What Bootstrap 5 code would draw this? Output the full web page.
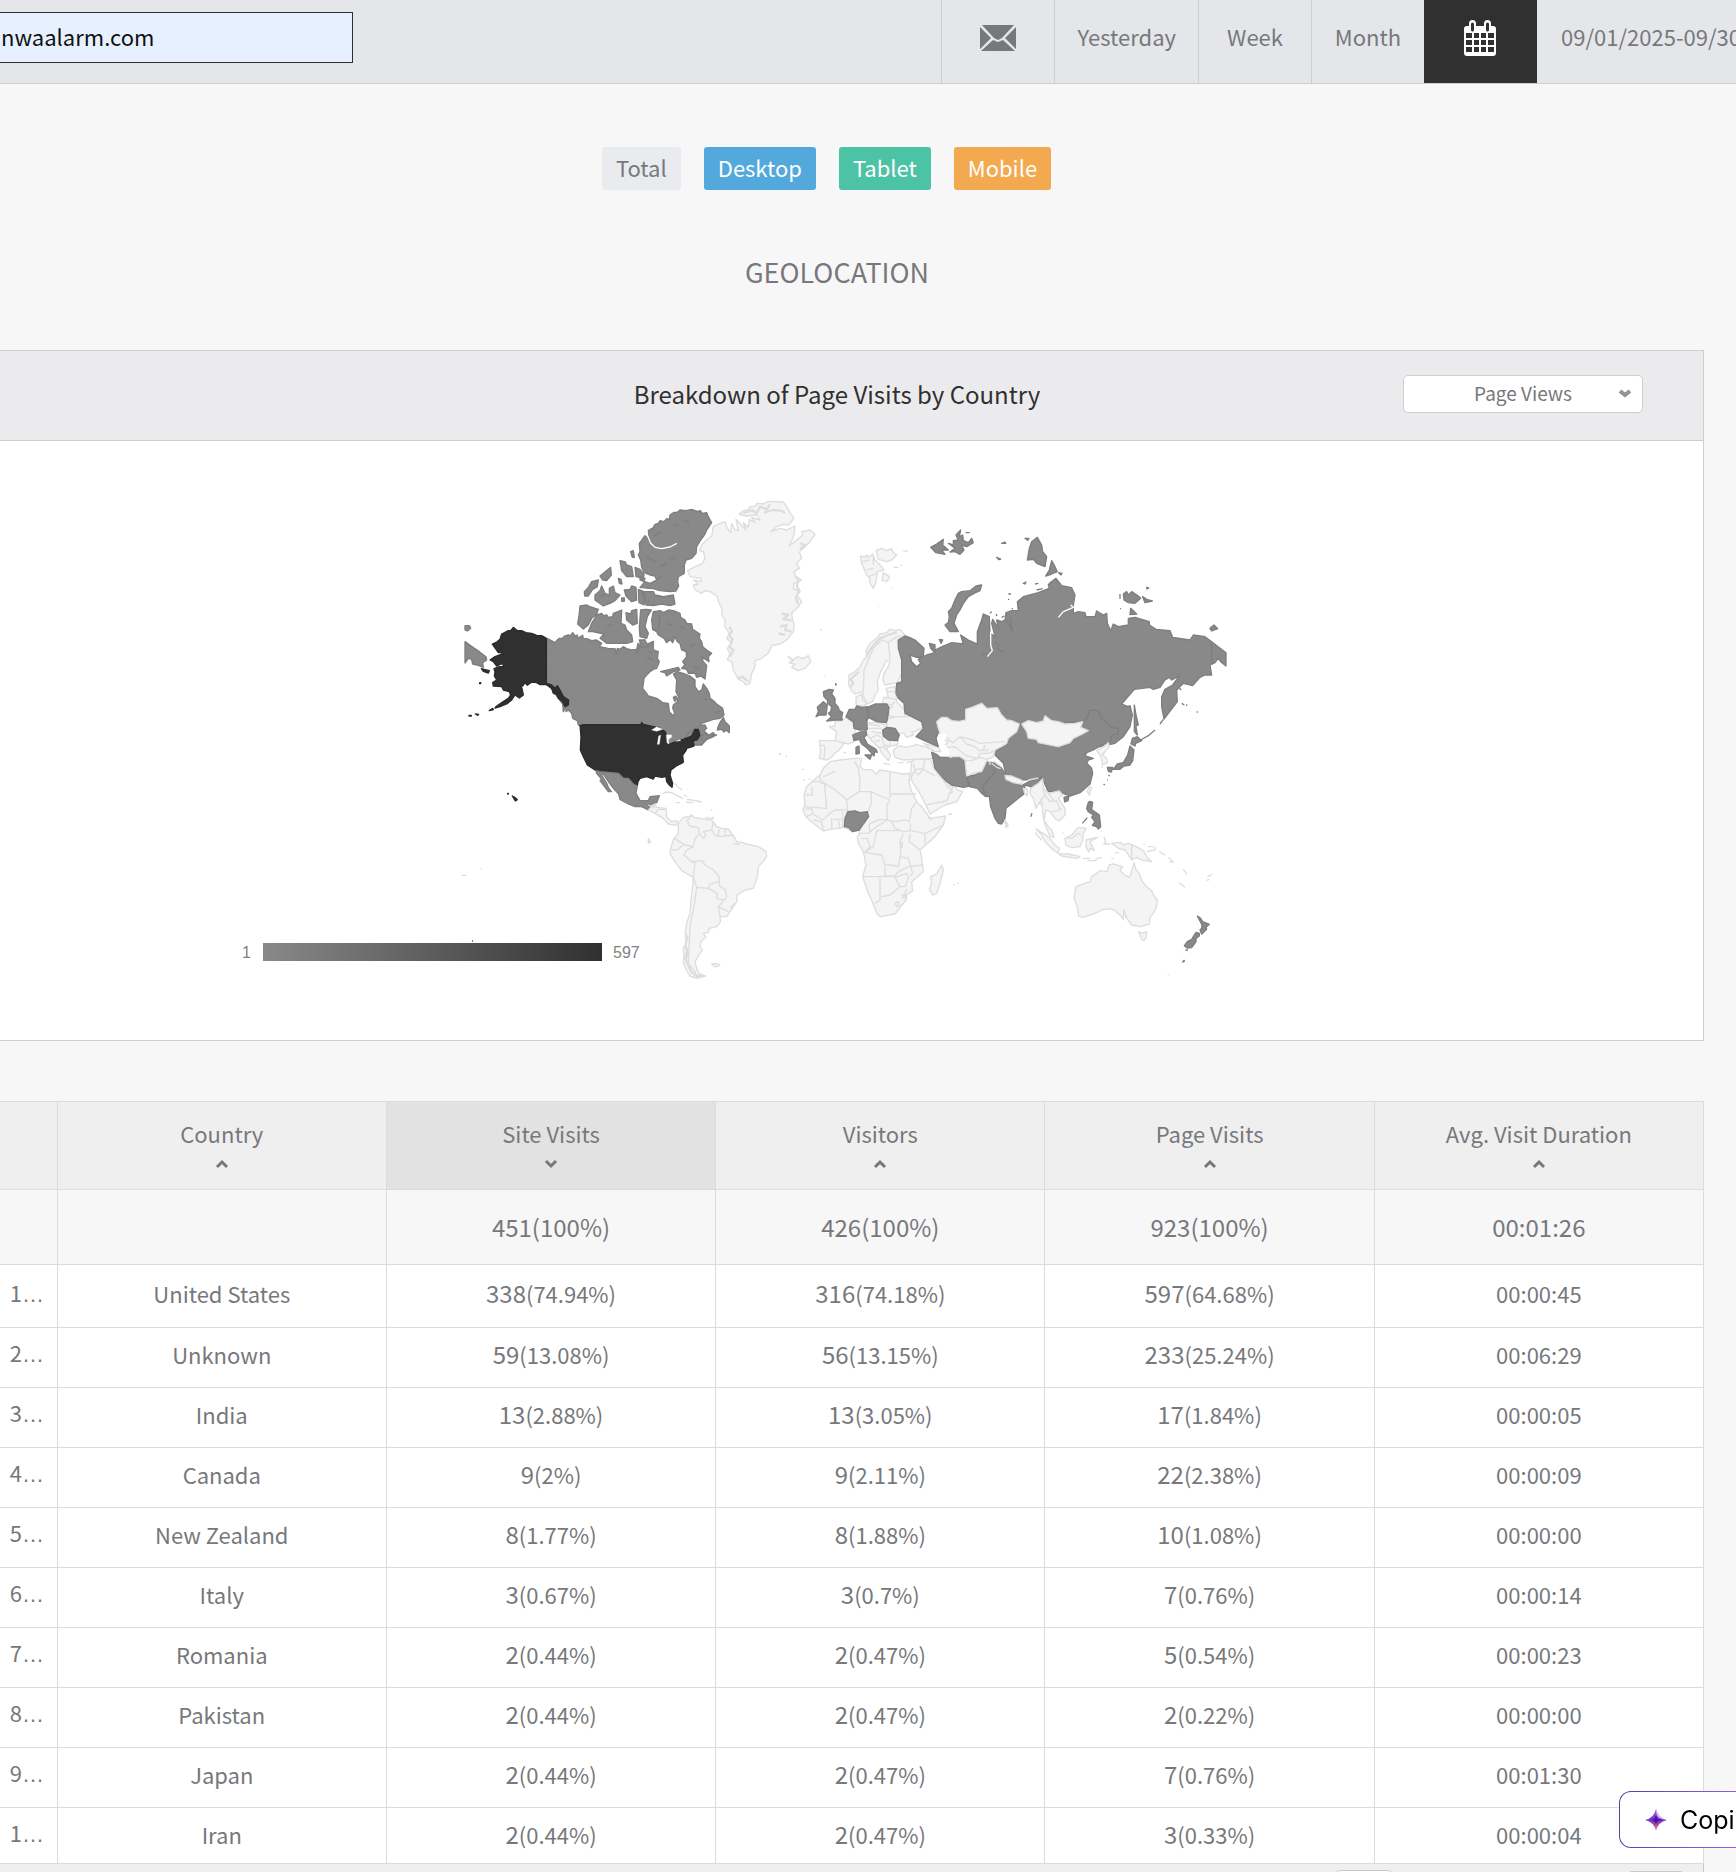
<!DOCTYPE html>
<html lang="en">
<head>
<meta charset="utf-8">
<meta name="viewport" content="width=device-width, initial-scale=1">
<title>Geolocation</title>
<link rel="stylesheet" href="https://cdn.jsdelivr.net/npm/bootstrap@5.3.0/dist/css/bootstrap.min.css">
<style>
html{overflow:hidden}
body{background:#f7f7f7;color:#77787b;font-family:"Noto Sans CJK SC","Open Sans",sans-serif;font-size:22px;line-height:32px;overflow:hidden;height:100vh}
.topbar{height:84px;background:#e5e6ea;border-bottom:1px solid #cdced0;overflow:hidden}
.site-field{width:383px;height:51px;margin:12px 0 0 -30px;padding:0 0 3px 30px;background:#e7f0fe;border:1px solid #303030;border-radius:0;color:#111;line-height:32px}
.period{min-width:113px;padding:0 22px 12px;color:#77787b;border-left:1px solid #cdced0;height:83px}
.period svg{margin-top:5px}
.period-on{background:#303030;border-color:#303030;padding-right:25px}
.date-range{flex:0 0 199px;overflow:hidden;border:0;padding-left:24px}
.wrapper{margin:63px 32px 0 -30px}
.device{border:0;border-radius:3px;height:43px;padding:0 14px 3px;font-size:22px;line-height:32px;color:#fff}
.dev-total{background:#e9ebef;color:#77787b}.dev-desk{background:#54a9dc}.dev-tab{background:#4dc3a5}.dev-mob{background:#f3a950}
.devices{gap:23px;margin-right:21px}
h1{font-size:27px;line-height:40px;font-weight:400;margin:62px 0 58px;text-align:center}
.panel{border:1px solid #cdced0;background:#fff}
.panel-top{height:90px;padding-bottom:3px;background:#ebebed;border-bottom:1px solid #cdced0;display:grid;grid-template-columns:1fr auto 1fr;align-items:center}
.panel-top h2{font-size:24px;line-height:36px;font-weight:400;color:#303030;grid-column:2;margin:0}
.metric{justify-self:end;margin-right:60px;position:relative;width:240px}
.metric select{width:100%;height:38px;border:1px solid #cdced0;border-radius:5px;background:#fff;color:#77787b;font-size:19px;appearance:none;text-align:center;text-align-last:center;padding:0 0 2px;display:block}
.metric svg{position:absolute;right:12px;top:14px;pointer-events:none}
.map{display:block;width:100%;height:auto}
.map path{stroke-width:4;stroke-linejoin:round}
.lt path{fill:#f4f4f4;stroke:#ddd}.md path{fill:#898989;stroke:#7e7e7e}.dk path{fill:#303030;stroke:#2b2b2b}
.map .edge{fill:none;stroke:#ddd}.map .gedge{fill:none;stroke:#7e7e7e}.map .sea{fill:#fff;stroke:#fff;stroke-width:1}.map .chan{fill:none;stroke:#fff}
.map .fjord{stroke-width:7}
.geo{width:100%;table-layout:fixed;margin:60px 0 0;border-collapse:collapse;background:#fff;text-align:center}
.geo th,.geo td{border:1px solid #dcdcdc;font-weight:400;padding:0}
.geo .rank{width:5%}
.geo th{background:#efefef;height:88px}
.geo th.sorted{background:#e2e2e2}
.geo th button{background:none;border:0;color:inherit;padding:0 0 6px;display:block;width:100%;line-height:32px}
.geo th svg{display:block;margin:10px auto 0}
.geo tbody td{height:60px;padding-bottom:8px}
.geo tbody .sum td{background:#f7f7f7;height:75px;font-size:24px;padding-bottom:1px}
.geo tbody .first td{height:63px;padding-bottom:6px}
.geo tbody .last td{height:56px;padding-bottom:4px}
.geo td b{font-weight:400;font-size:24px}
.geo tbody td:nth-child(1){padding-left:26px}
.geo td i{font-style:normal;font-family:"Liberation Sans",sans-serif}
.pager{height:60px;background:#efefef;border-right:1px solid #c9c9c9;padding:6px 18px;gap:234px}
.pager button{width:58px;height:34px;border:1px solid #c9c9c9;border-radius:5px;background:#fff}
.pager button:last-child{background:#ddd;margin-top:1px}
.copilot{position:fixed;right:-60px;bottom:24px;width:177px;height:57px;border:1px solid transparent;border-radius:12px;background:linear-gradient(#fff,#fff) padding-box,linear-gradient(100deg,#5b3aa8,#8a5cf0 60%,#c55ab0) border-box;color:#000;font:400 25px/32px Inter,sans-serif;padding:0 0 0 25px;gap:13px}
</style>
<script src="https://cdn.jsdelivr.net/npm/bootstrap@5.3.0/dist/js/bootstrap.bundle.min.js"></script>
</head>
<body>
<header class="topbar d-flex">
<input class="site-field" type="text" value="nwaalarm.com" aria-label="Site">
<nav class="d-flex ms-auto">
<a class="period d-flex align-items-center justify-content-center" href="#" aria-label="Email report"><svg width="36" height="26" viewBox="0 0 36 26" fill="#77787b"><path d="M2 0h32L22 13l-4 2-4-2zM0 2l11 11L0 24zM36 2v22L25 13zM1 26l12-11 5 2 5-2 12 11z"/></svg></a>
<a class="period d-flex align-items-center justify-content-center text-decoration-none" href="#">Yesterday</a>
<a class="period d-flex align-items-center justify-content-center text-decoration-none" href="#">Week</a>
<a class="period d-flex align-items-center justify-content-center text-decoration-none" href="#">Month</a>
<a class="period period-on d-flex align-items-center justify-content-center" href="#" aria-label="Pick dates"><svg width="34" height="37" viewBox="0 0 34 37"><rect x="1" y="6" width="32" height="30" rx="3" fill="#fff"/><path d="M9.500 3.500v6M24.500 3.500v6" stroke="#fff" stroke-width="7" stroke-linecap="round"/><path d="M9.500 4v6M24.500 4v6" stroke="#303030" stroke-width="3" stroke-linecap="round"/><path fill="#303030" d="M3 13h6v5H3zM11 13h5v5h-5zM18 13h5v5h-5zM25 13h6v5h-6zM3 20h6v5H3zM11 20h5v5h-5zM18 20h5v5h-5zM25 20h6v5h-6zM3 27h6v5H3zM11 27h5v5h-5zM18 27h5v5h-5zM25 27h6v5h-6z"/></svg></a>
<a class="period date-range d-flex align-items-center text-decoration-none text-nowrap" href="#">09/01/2025-09/30/2025</a>
</nav>
</header>
<main class="wrapper">
<div class="devices d-flex justify-content-center">
<button class="device dev-total">Total</button><button class="device dev-desk">Desktop</button><button class="device dev-tab">Tablet</button><button class="device dev-mob">Mobile</button>
</div>
<h1>GEOLOCATION</h1>
<section class="panel">
<div class="panel-top">
<h2>Breakdown of Page Visits by Country</h2>
<div class="metric"><select aria-label="Metric"><option>Page Views</option></select><svg width="12" height="9" viewBox="0 0 12 9"><path d="M1 2l5 4 5-4" fill="none" stroke="#929395" stroke-width="4"/></svg></div>
</div>
<svg class="map" viewBox="-29 441 1732 599" role="img" aria-label="World map of page visits">
<defs><linearGradient id="ramp"><stop stop-color="#898989"/><stop offset="1" stop-color="#303030"/></linearGradient></defs>
<!-- North America -->
<g transform="translate(440 480) scale(.33333)">
<g class="md">
<path d="M75,485L100,503 118,515 138,530 140,540 128,548 130,562 115,556 98,552 95,538 85,535 75,549ZM75,437L88,437 92,445 82,453 75,450Z"/>
<path d="M321,475L345,488 352,480 358,475 368,475 372,469 385,465 392,467 398,458 405,468 412,465 414,475 428,466 430,476 440,476 455,482 470,480 485,490 478,500 505,505 526,507 528,524 532,505 540,508 550,500 560,506 575,510 590,508 594,490 600,498 608,482 615,480 612,498 622,492 640,484 640,510 655,515 652,535 658,545 650,565 640,568 630,575 620,585 612,595 608,625 620,640 625,648 650,655 668,668 685,670 688,695 700,708 704,698 698,685 700,675 712,665 716,650 708,635 710,600 700,582 712,575 735,582 750,588 765,600 765,620 775,635 785,630 790,612 800,625 808,640 810,655 820,662 830,672 848,685 852,705 840,715 820,718 800,725 785,730 778,737 795,735 800,745 792,752 805,765 830,765 815,772 800,778 785,795 720,795 685,797 650,745 432,738 415,735 412,722 398,715 395,700 385,690 378,695 380,680 370,695 368,672 321,608Z"/>
<path d="M850,712L855,725 868,738 868,758 858,750 852,756 845,748 832,750 835,738 840,728Z"/>
<path d="M640,395L660,392 670,398 685,390 700,392 720,400 722,412 735,420 740,430 755,432 758,448 780,462 778,475 785,485 788,500 800,510 815,520 805,530 807,545 785,530 790,545 800,556 795,597 782,588 770,592 765,580 745,580 740,568 725,565 735,555 728,545 740,530 738,515 725,510 720,490 712,485 705,470 698,488 690,478 680,488 672,475 655,465 650,455 638,448 635,420Z"/>
<path d="M662,575L690,568 715,562 720,570 700,575 680,588 675,578ZM700,652l8,-4 4,8 -8,8z"/>
<path d="M625,152L640,143 645,133 655,130 660,122 672,125 680,116 688,118 690,105 702,97 712,97 720,90 738,92 755,88 772,94 782,92 785,100 800,98 804,108 815,128 800,150 795,162 782,180 770,200 768,220 755,235 738,240 733,255 733,280 715,290 713,305 716,318 708,333 690,335 660,332 640,326 625,325 600,322 615,305 630,310 650,300 645,288 630,285 612,278 605,262 602,240 595,225 600,215 598,190 615,167 628,180Z"/>
<path d="M605,335L640,335 645,345 670,350 700,345 705,372 690,377 665,372 640,377 618,375 612,350ZM572,215l8,-3 3,20 -6,0zM540,242L556,246 560,255 575,260 580,290 560,290 545,272ZM585,262L600,268 612,285 610,295 588,290ZM480,288L492,278 512,262 514,285 500,302 488,300ZM433,335L445,322 455,305 475,300 472,320 458,328 445,348 434,348ZM465,345L480,332 485,318 495,340 508,345 508,325 520,318 525,338 540,345 525,362 510,370 490,378 465,360ZM535,295l8,3 3,14 -8,-2zM553,330L570,328 575,318 588,322 590,360 575,365 558,348ZM545,354l8,0 0,10 -8,0zM595,328L612,335 615,348 612,375 597,368ZM600,290l15,5 -3,10 -12,-5zM640,450l8,0"/>
<path d="M420,378L440,375 450,380 475,388 470,402 455,415 450,425 445,435 430,447 413,432 418,400ZM455,430L470,405 485,400 492,408 500,405 505,412 518,410 520,400 530,396 545,390 543,430 555,435 560,450 575,465 578,485 560,490 540,490 500,490 480,475 492,462 458,455 445,455ZM558,398L572,402 575,392 590,388 592,430 578,435 560,420ZM602,390L618,388 634,390 622,410 615,440 625,460 620,475 600,470 598,440ZM598,480l16,0 12,18 -22,5z"/>
<path class="chan" d="M622,166L632,190 645,202 665,206 690,201 710,190"/>
<path class="gedge" d="M730,120l20,10M700,140l15,-8M640,170l20,-15M620,230l25,15M660,260l20,-10M690,240l15,-8M660,350l15,2M650,300l15,-10M680,430l20,8M720,440l16,6M750,500l16,-8M760,560l18,6M790,655l12,6M660,405l-4,40M500,440l20,-6M480,350l16,-6M620,360l10,6M640,540l-20,-8M600,500l-12,22M620,510l18,10M828,700l12,-8M770,740L745,760 720,790"/>
</g>
<g class="dk">
<path d="M220,442L232,452 245,452 258,458 275,460 290,466 305,467 319,475 319,610 335,615 345,625 352,617 360,630 370,650 386,660 385,675 375,680 368,665 355,655 350,643 340,640 335,625 318,613 300,614 290,608 275,606 262,616 255,608 248,618 240,616 246,625 250,645 238,654 225,645 215,660 200,672 185,678 165,684 168,680 190,665 205,655 212,645 208,635 190,630 185,620 160,618 158,608 170,600 163,588 165,575 162,566 178,560 190,560 188,550 170,558 160,545 150,540 165,530 185,522 187,518 175,518 168,508 157,492 170,486 180,478 185,462 205,452 212,452ZM124,566L148,572 145,579 130,574ZM119,608h3v3h-3zM87,706h7v2h-7zM106,702l10,1 -3,3zM148,692l10,-7 2,4z"/>
</g>
</g>
<!-- USA, Mexico, Central and South America -->
<g transform="translate(540 700) scale(.33333)">
<g class="dk"><path d="M120,77L130,74 303,74 305,67 310,73 340,80 355,82 375,95 380,105 382,135 400,128 430,118 455,108 465,88 475,88 480,108 470,120 460,122 462,138 440,145 438,152 428,165 430,187 412,196 393,210 390,225 398,250 396,262 388,255 380,245 378,230 365,232 345,228 340,237 320,230 300,235 294,245 292,257 282,253 270,237 250,237 235,220 180,217 165,210 142,195 130,170 121,150 123,110Z"/></g>
<path class="sea" d="M335,90L350,80 368,88 350,94ZM352,133L356,108 362,105 358,133ZM379,104L395,105 395,111 386,118 386,132 381,128ZM408,124l12,-5 2,3z"/>
<g class="md"><path d="M480,112L495,100 505,106 520,98 524,104 505,115 490,124ZM168,212L180,215 235,220 250,235 265,235 280,252 292,258 288,280 300,302 325,302 330,290 358,287 350,308 340,310 330,316 325,330 305,320 285,320 265,312 240,298 236,282 220,265 205,245 190,222 185,225 200,250 205,262 214,275 205,275 180,242 185,238 170,220Z"/></g>
<g class="lt"><path d="M325,330L345,312 350,322 378,325 380,350 395,365 410,362 415,372 405,376 385,372 370,355 345,340Z"/>
<path d="M415,370L430,352 448,350 455,345 462,352 480,355 500,358 515,360 530,380 545,385 565,387 582,410 590,425 605,427 620,432 655,440 678,455 680,468 672,482 655,500 652,530 640,565 615,570 592,585 590,605 577,625 560,650 540,650 542,665 530,680 508,685 505,697 490,700 498,712 485,722 480,738 487,750 475,768 465,785 470,805 478,822 497,828 470,835 450,828 440,812 430,790 432,765 430,745 438,730 436,700 440,670 450,640 453,600 458,560 460,532 425,512 405,485 390,460 392,445 402,415 415,400Z"/>
<path class="edge" d="M455,345L442,362 448,378 475,383 478,400 465,415 460,440 435,435 402,415M460,440L440,450 432,465 455,485 487,482 495,495 520,510 537,530 537,545 510,552 505,565 470,562 460,532M395,450L410,450 430,435M455,485L465,490 460,532M478,400L490,415 498,405 490,395 515,390 520,365M515,390L525,405 545,410 575,405 582,410M537,388L535,408M556,388L556,408M537,545L540,560 555,568 560,590 552,600 530,595 532,580 505,565M552,600L535,620 540,650M535,620L565,635M470,562L465,600 458,640 450,680 448,730 445,790 465,815 470,835M580,432L600,432M345,340l10,-12 22,0M325,315l20,8M570,625l15,-15M436,700l8,15 -8,20 8,25 -6,20 12,25"/>
<path class="edge fjord" d="M436,735l6,20 -6,20 8,20 10,20 15,12 18,2"/>
<path class="edge" d="M368,282L378,276 395,278 410,286 430,296 M440,298L455,300 485,306M438,306L460,308M408,308h12M405,250l8,10M415,262l12,8M432,285l8,4M495,352l24,4 0,-6M515,328v4M325,415l6,12 -6,2zM716,162h8M736,169h4"/>
<path d="M515,792L530,790 540,795 530,800 525,800Z"/></g>
</g>
<g class="dk" transform="translate(220 760) scale(.33333)"><path d="M877,108L884,112 892,119 886,123ZM863,100h2v2h-2z"/></g>
<g class="lt" transform="translate(220 760) scale(.33333)"><path class="edge" d="M726,346h12M780,326h4"/></g>
<!-- Greenland, Iceland, Svalbard -->
<g class="lt" transform="translate(640 480) scale(.33333)">
<path d="M297,102L310,92 325,90 330,80 345,80 350,70 370,72 385,64 430,66 440,80 450,98 462,115 445,135 430,133 410,140 392,155 420,145 440,150 465,138 462,165 448,198 470,180 488,165 485,155 510,150 525,163 510,185 490,205 478,215 485,235 470,250 478,265 462,275 468,290 485,300 462,310 460,325 480,335 470,345 485,365 475,380 455,400 458,420 463,435 460,455 440,480 420,492 395,497 385,520 365,535 345,542 345,560 335,580 330,610 318,615 310,605 295,598 280,570 275,545 262,540 270,520 262,505 275,490 260,475 268,460 255,440 255,420 245,405 246,385 238,370 230,348 210,335 195,332 185,340 165,330 160,315 175,312 160,300 185,305 183,295 150,290 143,272 165,260 188,250 195,235 190,215 178,212 185,195 200,180 215,168 220,140 240,130 255,125 262,145 272,158 275,130 285,150 295,152 288,118 318,150 310,128 325,142 328,118 345,128 335,112 360,120 350,105 315,108Z"/>
<path class="edge fjord" d="M310,100l25,-10 15,10 10,-20 20,8 10,-15M372,98l25,-8 28,2 10,8M425,400l20,5 -15,12 25,5M420,440l20,-5 -5,15 20,5M415,460l20,5M268,440l8,15 -8,10 10,15 -10,20 12,10 -10,20M466,290l10,8 -6,20 8,15 -10,20 6,20M295,595l12,-5 18,15M480,190l15,5 -15,12"/>
<path d="M445,530L460,540 472,530 490,535 505,527 513,545 495,565 475,572 455,562 465,553 447,548 458,543Z"/>
<path d="M662,228L675,232 680,225 685,232 698,222 705,240 720,255 732,270 712,275 708,305 700,325 688,305 690,295 680,285 665,250ZM708,212L725,205 740,212 755,206 758,215 770,225 755,240 740,245 715,238ZM730,278L748,290 742,304 726,302Z"/>
<path class="edge" d="M668,245l20,-5M680,270l20,-5M685,290l25,-10M700,225l0,30M760,262h15M540,450h6M715,378h2M553,588h2M753,324h2"/>
</g>
<!-- Europe, Middle East, Africa -->
<g transform="translate(780 620) scale(.33333)">
<g class="lt">
<path d="M215,212L206,195 207,165 225,155 240,140 250,120 262,110 258,90 270,70 290,55 300,42 320,38 330,28 345,32 360,28 375,45 362,50 352,68 362,90 365,105 367,155 352,188 330,192 315,195 308,180 312,160 325,140 330,125 318,122 310,140 300,160 292,185 295,210 285,225 278,245 262,252 252,235 248,215 225,222Z"/>
<path class="edge fjord" d="M212,200l8,-10 -8,-12 10,-10 15,-12M258,110l12,-20 15,-20 15,-15 25,-10 25,-8"/>
<path class="edge" d="M250,215L252,150 265,120 280,85 305,60 325,68 358,45M325,68L330,120"/>
<path d="M228,232L245,222 248,240 262,250 250,258 228,255ZM308,245L312,232 325,232 318,205 345,200 350,245 380,275 372,290 330,290 322,262 308,252ZM320,297L350,290 385,290 400,282 408,295 425,305 428,322 405,335 395,335 400,345 380,352 372,340 355,340 345,325 320,322Z"/>
<path class="edge" d="M312,232L348,238M308,250L335,255 345,245M318,215L345,215M325,290L322,270 340,258"/>
<path d="M148,320L165,318 165,302 180,303 200,293 215,305 230,318 222,345 222,365 205,372 190,368 165,362 170,335ZM118,362L165,362 192,370 178,390 165,400 150,415 140,420 118,415 122,395Z"/><path class="edge" d="M122,375L135,378 132,415M200,293l20,12M190,398h8"/>
<path d="M240,330L260,318 262,308 290,308 320,315 308,335 310,350 330,362 355,362 352,375 330,378 318,385 332,405 325,422 305,400 300,385 275,362 262,345 245,342Z"/>
<path class="edge" d="M262,325L305,325M275,335L305,340M270,355L290,345 305,352 312,375 325,378M285,365L300,360M295,385L310,380 320,390M262,312L300,318M330,365L330,378M310,430l20,4"/>
<path d="M345,385L360,378 380,382 410,374 450,385 462,392 458,415 405,418 370,420 345,412 340,395ZM430,370L475,382 482,395 460,395 450,385Z"/>
<path d="M150,425L180,420 225,415 245,415 240,440 250,448 275,450 290,462 300,450 330,455 370,462 388,460 390,480 385,480 395,515 410,545 425,560 445,588 445,595 470,592 497,588 490,615 465,650 440,672 420,690 425,715 430,755 395,785 398,812 380,825 378,840 345,882 300,890 290,880 275,840 265,820 248,770 258,735 250,695 235,670 232,650 240,640 235,620 218,635 193,622 150,628 130,633 100,610 78,590 68,570 75,555 72,525 80,500 95,485 120,465 130,445Z"/>
<path d="M395,425L405,418 450,418 462,445 475,465 485,475 500,495 520,500 525,490 530,508 548,515 530,545 495,555 450,582 440,560 425,530 410,505 395,482 392,460Z"/>
<path class="edge" d="M95,485H120V465M122,482L165,510 185,525 200,540 238,515 272,515M330,535V455M332,522H408M235,445L225,425M235,445L240,480 238,515M95,500L98,525 78,525M122,490L133,490 140,565 75,560M165,455L130,470M272,515L330,540M272,515L275,545 265,575M200,540L203,570 165,570M330,540L320,555 322,600 300,598 270,610M265,640L290,620 322,600 345,605 375,600 388,605 395,565 410,545M335,605L345,625 370,635 392,632 435,640 490,615M392,610L390,632M435,640V672M445,588L455,600M390,640L388,665 420,690M370,640L360,665 362,710M290,632H365M290,632L280,680 253,697 305,705 315,735 335,735 355,740 360,710 385,715 M315,740V768H345L355,755 385,740 428,735M385,715L392,740 398,760 390,770M250,770H345M300,775V840L285,850M305,830L330,825 360,800 345,772 380,760 385,775 375,800 360,800M380,808L375,820 380,835M155,595V628M160,598H185M175,598L180,625M188,575L188,622M130,630L125,605 100,600M78,590L98,582 95,565 75,568M98,582L128,600 150,580 165,570M238,640H262M245,655H262L270,680 253,697M345,850l8,-5 6,8 -8,8zM362,668l5,0 0,15 -5,0zM265,640L235,640M267,610L270,640M368,825l8,0 0,8 -8,0z"/>
<path class="edge" d="M400,430L405,450 430,445 435,418M405,450L395,470M405,455L415,465 430,448 465,468M440,555L460,550 500,543 508,520 520,500M500,500L515,508 525,492M508,520L520,515"/>
<path d="M485,735L490,750 480,790 470,820 458,825 448,808 455,790 452,770 470,762Z"/>
<path class="edge" d="M508,582h8M520,795h4M532,790h4M66,448h6M70,480l5,0M85,478h6M355,428l15,0M380,428l14,-3M0,403h3M16,410h3"/>
</g>
<g class="md">
<path d="M130,215L138,212 148,208 160,210 155,222 165,235 165,250 175,262 178,272 188,278 185,292 187,300 165,300 140,303 155,290 145,280 152,275 155,260 143,250 142,240 132,230ZM112,262L130,245 142,255 138,285 120,285 108,290 115,275ZM167,191h1v4h-1z"/>
<path d="M198,290L208,268 225,268 230,258 245,262 262,260 265,290 260,305 262,328 240,330 222,325 220,305 205,295ZM262,262L285,252 320,252 327,262 322,300 318,308 290,305 265,292Z"/>
<path d="M218,345L235,338 258,332 260,345 252,352 262,372 288,388 292,397 284,395 282,408 275,400 262,385 245,372 238,358 222,362ZM255,405L275,404 270,418ZM228,382L237,378 238,400 228,402ZM308,330L322,322 345,325 358,345 352,362 325,360 310,348Z"/>
<path d="M203,575L225,573 240,578 262,575 266,590 250,612 238,630 218,635 205,622 193,620 195,595Z"/>
</g>
</g>
<!-- Asia -->
<g transform="translate(900 520) scale(.33333)">
<g class="md">
<path d="M15,348L30,353 45,360 72,385 70,410 50,412 30,405 35,425 50,440 62,430 55,418 80,405 105,398 92,385 88,370 105,375 105,390 130,378 155,368 190,372 182,345 205,360 232,372 232,335 245,300 250,282 268,290 270,340 285,350 275,310 278,298 295,325 290,300 305,305 315,300 318,278 335,272 355,272 352,245 370,230 415,218 430,212 448,205 445,195 450,188 468,175 485,197 515,203 525,225 520,255 520,280 535,275 555,278 558,290 585,290 590,273 610,285 620,280 622,310 632,332 640,312 655,320 685,315 685,295 705,292 748,305 748,315 768,328 810,332 818,352 870,360 880,345 915,350 935,365 978,398 978,438 962,425 955,415 945,428 930,435 935,465 915,465 900,472 878,497 850,490 830,510 832,545 805,580 792,597 785,560 785,530 795,508 818,495 838,468 815,480 808,472 795,480 780,502 760,508 750,502 703,508 665,552 685,560 690,557 697,585 690,620 670,650 645,670 600,680 360,690 355,612 320,600 292,565 260,565 245,552 197,568 197,600 160,607 135,590 112,600 118,630 108,655 115,680 80,665 48,650 70,625 65,605 15,580 12,550 -5,535 -12,520 -10,490 5,485 5,420 -5,385 -5,360Z"/>
<path d="M355,615L350,635 325,655 320,675 283,695 285,705 310,730 318,765 370,780 415,775 430,782 445,815 475,815 510,828 540,818 570,792 578,760 575,745 560,730 565,720 580,715 555,708 560,698 580,690 605,675 632,665 635,645 655,640 655,625 632,622 625,610 605,597 598,577 585,570 568,572 562,595 545,605Z"/>
<path d="M95,697L108,702 120,712 145,712 165,710 190,715 197,740 200,770 210,798 190,802 155,795 140,785 130,775 105,745ZM200,770L225,765 245,755 250,740 262,725 285,730 285,755 265,780 250,800 262,815 258,830 245,820 232,805 208,800Z"/>
<path d="M285,730L305,745 318,765 320,778 368,795 395,780 425,770 415,790 405,812 392,800 375,795 372,822 355,835 318,865 315,895 305,912 295,910 285,895 272,860 268,830 255,828 248,800 265,780 285,755Z"/>
<path d="M703,555L708,585 715,615 708,618 712,645 703,635ZM697,655L712,650 725,662 707,670 705,678 693,672ZM690,678L702,690 698,722 690,735 672,738 660,748 640,748 652,732 670,728 683,705ZM622,742L638,742 634,756 625,754ZM492,832L507,828 504,842 494,846Z"/>
<path class="gedge" d="M722,660L745,647 765,630M780,612L790,598M625,765l5,3M612,794h3M845,550l8,5M858,555l4,1M890,576h4M392,890l4,-10M935,365V435M270,280l5,-5M838,505l6,5"/>
<path d="M245,195L240,212 222,220 205,230 190,250 180,270 170,285 162,310 175,335 150,335 135,315 145,308 148,290 145,275 155,265 165,240 175,220 185,215 210,212 228,198Z"/>
<path d="M92,82L110,72 130,58 128,75 145,90 125,90 135,103 118,100 108,98ZM145,70L160,75 160,62 175,60 168,45 182,30 178,50 188,45 190,62 205,68 215,55 220,68 200,80 185,75 192,90 180,103 165,95 150,96 165,85ZM197,38h12M388,85L395,65 412,52 425,75 428,95 440,110 435,140 410,130 400,118 382,120ZM455,122L465,140 472,155 455,162 437,168 448,150ZM375,55h12l-4,6zM305,70l10,-4 2,4zM290,112l12,5 -6,2zM476,158l10,2 -3,5zM370,190l8,-4 -3,6zM405,192l10,-2M410,210l18,-4M325,222h8M324,238h4M335,266h4M670,222L680,215 685,225 695,215 715,228 722,235 705,250 685,248 672,240ZM660,222v14M728,230L740,238 757,243 735,248ZM692,265L710,282 690,284ZM740,202l6,2 -5,3zM660,266h3M930,325L942,315 953,326 935,333ZM118,358l10,2 -5,10zM288,282l3,6M305,292l8,-4"/>
<path class="chan" d="M272,335L272,375 277,392 262,410M490,275l-15,17M490,275L520,262 512,255"/>
<path class="gedge" d="M285,365l10,10 0,15 15,4M320,300l18,35M330,290l8,50M245,402h15"/>
</g>
<g class="lt">
<path d="M110,605L125,592 140,592 155,602 178,604 197,600 197,568 215,562 245,550 260,565 292,563 305,585 320,600 335,602 358,612 350,635 325,655 320,670 285,690 280,710 262,718 245,755 225,758 200,768 195,720 180,710 160,710 150,712 135,700 120,690 145,665 125,655 115,625Z"/>
<path class="edge" d="M135,650L158,668 180,650 200,672 225,680 238,692 265,690 M140,682L165,680 200,708 235,715M180,650L220,660 240,670 315,665M235,715L240,700 265,700 285,692M195,722L215,722 238,712 262,718M250,690L255,675"/>
<path d="M365,612L385,602 410,608 430,603 435,587 455,602 475,605 495,612 525,610 548,605 542,622 565,632 545,643 520,655 510,668 475,680 415,668 410,658 385,655 380,635Z"/>
<path d="M315,766L335,768 368,782 366,793 340,788 318,778Z"/>
<path class="edge" d="M262,722l8,5 0,8M280,722l12,10 12,8M275,730l15,12 12,4M385,780l30,-6M315,900l8,12 -5,10zM145,883h8M10,95l15,-3M0,136h6"/>
</g>
<path class="sea" d="M120,642L140,642 138,655 128,665 138,680 148,690 146,708 130,706 122,690 118,660Z"/>
</g>
<!-- South-east Asia and Oceania -->
<g transform="translate(1000 680) scale(.33333)">
<g class="lt">
<path d="M290,212L310,200 325,188 328,200 315,215 308,225 320,235 322,248 308,255 303,230ZM70,325L82,328 82,348 74,340ZM92,325L115,310 128,297 130,325 145,340 178,333 188,345 175,355 195,385 195,405 178,423 165,415 150,395 138,390 132,420 145,440 155,450 162,472 150,468 135,435 128,400 128,385 120,365 108,385 100,355 90,340Z"/>
<path class="edge" d="M128,325L135,345 122,360 130,375M135,345L150,365 170,362 180,390M145,340L165,365M155,395L175,392 185,385M305,222L315,218M303,262h5"/>
<path d="M108,447L130,460 150,475 165,495 178,505 174,520 160,510 135,485 125,465ZM175,521L205,522 240,530 230,535 185,528ZM195,475L215,465 235,442 258,445 250,460 248,480 240,500 215,503 198,495ZM258,480L292,472 270,485 283,512 270,505 266,516 258,500ZM335,490L362,487 370,495 385,490 410,500 430,512 440,530 455,545 425,540 410,532 395,540 375,510 355,505ZM268,320L275,322 268,345 262,335Z"/>
<path class="edge" d="M395,495V538M197,472L215,475 235,460 242,465M105,458L125,480M248,535H270M262,542H290M285,538L305,532M312,470l5,15 -3,5M310,492h20M345,518h10M335,535h5M440,515L465,510 465,500M445,500h15M430,493h5M478,515L495,525M505,532L520,545M508,545l12,3M550,568L560,583M538,608L555,622M620,602l8,-4M622,590l14,-6M503,885h3M302,453h3M188,458h3M15,425l10,12 -7,6z"/>
<path d="M328,555L340,552 368,560 360,572 375,585 388,592 395,575 402,548 408,570 418,580 425,602 440,620 455,632 462,648 472,660 470,680 460,700 450,712 448,732 420,740 395,735 380,715 372,690 370,718 360,705 345,692 330,686 305,690 285,700 270,705 248,712 236,708 232,680 222,655 228,620 250,612 270,605 275,590 290,580 300,572 320,575ZM416,755L426,760 440,755 438,772 432,782 425,778Z"/>
<path class="edge" d="M375,700l5,15"/>
</g>
<g class="md">
<path d="M265,367L270,364 278,367 275,388 288,398 298,405 302,440 295,447 290,440 277,436 285,425 275,412 280,405 265,395 260,385ZM592,708L602,715 608,725 628,733 618,742 620,748 605,762 600,750 605,745 606,735ZM588,757L598,760 598,768 588,775 588,785 575,803 562,804 553,798 562,785 575,778ZM548,846l4,-5 1,3z"/>
<path class="gedge" d="M247,430L262,413M310,313h3M322,300h2M556,810h8"/>
</g>
</g>
<rect x="263" y="943" width="339" height="18" fill="url(#ramp)"/><rect x="472" y="940" width="1" height="2" fill="#777"/>
<g font-family="Liberation Sans, sans-serif" font-size="16" fill="#828282"><text x="242" y="958">1</text><text x="613" y="958">597</text></g>
</svg>
</section>
<table class="geo">
<thead><tr><th class="rank"></th>
<th><button>Country<svg width="14" height="10" viewBox="0 0 14 10"><path d="M2 8l5-5 5 5" fill="none" stroke="#77787b" stroke-width="3"/></svg></button></th>
<th class="sorted"><button>Site Visits<svg width="14" height="10" viewBox="0 0 14 10"><path d="M2 2l5 5 5-5" fill="none" stroke="#77787b" stroke-width="3"/></svg></button></th>
<th><button>Visitors<svg width="14" height="10" viewBox="0 0 14 10"><path d="M2 8l5-5 5 5" fill="none" stroke="#77787b" stroke-width="3"/></svg></button></th>
<th><button>Page Visits<svg width="14" height="10" viewBox="0 0 14 10"><path d="M2 8l5-5 5 5" fill="none" stroke="#77787b" stroke-width="3"/></svg></button></th>
<th><button>Avg. Visit Duration<svg width="14" height="10" viewBox="0 0 14 10"><path d="M2 8l5-5 5 5" fill="none" stroke="#77787b" stroke-width="3"/></svg></button></th></tr></thead>
<tbody>
<tr class="sum"><td></td><td></td><td>451(100%)</td><td>426(100%)</td><td>923(100%)</td><td>00:01:26</td></tr>
<tr class="first"><td>1<i>…</i></td><td>United States</td><td><b>338</b>(74.94%)</td><td><b>316</b>(74.18%)</td><td><b>597</b>(64.68%)</td><td>00:00:45</td></tr>
<tr><td>2<i>…</i></td><td>Unknown</td><td><b>59</b>(13.08%)</td><td><b>56</b>(13.15%)</td><td><b>233</b>(25.24%)</td><td>00:06:29</td></tr>
<tr><td>3<i>…</i></td><td>India</td><td><b>13</b>(2.88%)</td><td><b>13</b>(3.05%)</td><td><b>17</b>(1.84%)</td><td>00:00:05</td></tr>
<tr><td>4<i>…</i></td><td>Canada</td><td><b>9</b>(2%)</td><td><b>9</b>(2.11%)</td><td><b>22</b>(2.38%)</td><td>00:00:09</td></tr>
<tr><td>5<i>…</i></td><td>New Zealand</td><td><b>8</b>(1.77%)</td><td><b>8</b>(1.88%)</td><td><b>10</b>(1.08%)</td><td>00:00:00</td></tr>
<tr><td>6<i>…</i></td><td>Italy</td><td><b>3</b>(0.67%)</td><td><b>3</b>(0.7%)</td><td><b>7</b>(0.76%)</td><td>00:00:14</td></tr>
<tr><td>7<i>…</i></td><td>Romania</td><td><b>2</b>(0.44%)</td><td><b>2</b>(0.47%)</td><td><b>5</b>(0.54%)</td><td>00:00:23</td></tr>
<tr><td>8<i>…</i></td><td>Pakistan</td><td><b>2</b>(0.44%)</td><td><b>2</b>(0.47%)</td><td><b>2</b>(0.22%)</td><td>00:00:00</td></tr>
<tr><td>9<i>…</i></td><td>Japan</td><td><b>2</b>(0.44%)</td><td><b>2</b>(0.47%)</td><td><b>7</b>(0.76%)</td><td>00:01:30</td></tr>
<tr class="last"><td>1<i>…</i></td><td>Iran</td><td><b>2</b>(0.44%)</td><td><b>2</b>(0.47%)</td><td><b>3</b>(0.33%)</td><td>00:00:04</td></tr>
</tbody>
</table>
<div class="pager d-flex justify-content-end"><button aria-label="Page"></button><button aria-label="Next"></button></div>
</main>
<button class="copilot d-flex align-items-center"><svg width="22" height="22" viewBox="0 0 22 22"><defs><linearGradient id="star" x2="0" y2="1"><stop stop-color="#a259ff"/><stop offset=".5" stop-color="#7b2fd0"/><stop offset=".75" stop-color="#b0509a"/><stop offset="1" stop-color="#ffa58a"/></linearGradient></defs><path fill="url(#star)" d="M11 0q2 9 11 11-9 2-11 11-2-9-11-11 9-2 11-11z"/><path fill="#d9b8ff" d="M11 0q2 9 11 11-7-1-9-3t-2-8z"/><path fill="#4a189c" d="M11 6l2 4 5 1-5 1-2 3-2-3-3-1 3-1z"/></svg>Copilot</button>
</body>
</html>
